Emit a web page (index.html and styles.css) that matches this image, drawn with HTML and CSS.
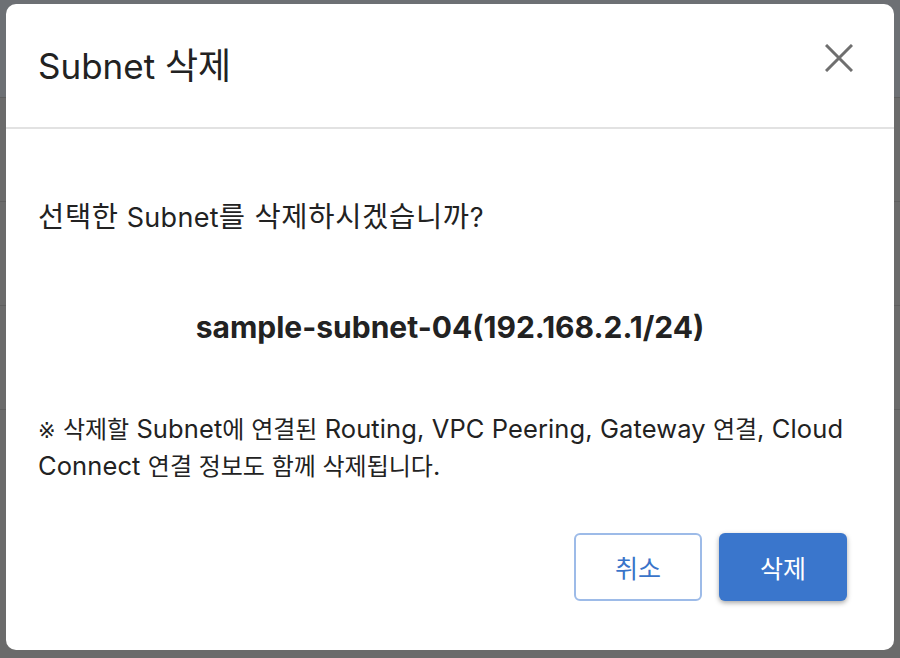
FILE: index.html
```html
<!DOCTYPE html>
<html lang="ko">
<head>
<meta charset="utf-8">
<title>Subnet 삭제</title>
<link rel="stylesheet" href="styles.css">
</head>
<body>
<div class="backdrop">
  <div class="bg-top"></div>
  <div class="bg-row"></div>
  <div class="bg-row"></div>
  <div class="bg-row"></div>
  <div class="bg-rest"></div>
</div>
<div class="dialog" role="dialog">
  <header class="dialog-header">
    <h1 class="dialog-title">Subnet <span class="ko">삭제</span></h1>
    <button class="close-btn" aria-label="닫기">
      <svg width="28" height="28" viewBox="0 0 28 28"><path d="M1 1 L27 27 M27 1 L1 27" stroke="#6f6f6f" stroke-width="3" fill="none"/></svg>
    </button>
  </header>
  <div class="dialog-body">
    <p class="question"><span class="ko">선택한</span> Subnet<span class="ko">를 삭제하시겠습니까</span>?</p>
    <p class="target">sample-subnet-04(192.168.2.1/24)</p>
    <p class="note"><span class="mark">※</span> <span class="ko">삭제할</span> Subnet<span class="ko">에 연결된</span> Routing, VPC Peering, Gateway <span class="ko">연결</span>, Cloud Connect <span class="ko">연결 정보도 함께 삭제됩니다</span>.</p>
  </div>
  <footer class="dialog-footer">
    <button class="btn btn-cancel">취소</button>
    <button class="btn btn-delete">삭제</button>
  </footer>
</div>
</body>
</html>
```
FILE: styles.css
```css
* { box-sizing: border-box; }
html, body { margin: 0; padding: 0; }
body {
  width: 900px;
  height: 658px;
  overflow: hidden;
  position: relative;
  background: #6b6b6b;
  font-family: Inter, "Noto Sans CJK KR", "Noto Sans", sans-serif;
}
.backdrop {
  position: absolute;
  inset: 0;
  display: flex;
  flex-direction: column;
}
.bg-top { height: 98px; background: #6d7074; border-bottom: 1px solid #5f5f5f; }
.bg-row { height: 104px; background: #6b6b6b; border-bottom: 1px solid #5f5f5f; }
.bg-rest { flex: 1; background: #6b6b6b; }

.ko { font-family: "Noto Sans CJK KR", sans-serif; letter-spacing: 0; line-height: 20px; }
.mark { font-family: "DejaVu Sans", sans-serif; font-size: 21px; letter-spacing: 0; line-height: 20px; }

.dialog {
  position: absolute;
  left: 6px;
  top: 4px;
  width: 888px;
  height: 646px;
  background: #fff;
  border-radius: 10px;
  display: flex;
  flex-direction: column;
  color: #222;
}
.dialog-header {
  height: 125px;
  border-bottom: 2px solid #e2e2e2;
  display: flex;
  align-items: center;
  justify-content: space-between;
  padding: 0 41px 0 32px;
}
.dialog-title {
  margin: 0;
  font-size: 35px;
  line-height: 40px;
  font-weight: 400;
  color: #222;
}
.dialog-title .ko { font-size: 36px; }
.close-btn {
  border: 0;
  background: none;
  padding: 0;
  width: 28px;
  height: 28px;
  display: flex;
  margin-bottom: 16px;
}
.dialog-body {
  padding: 72px 32px 0;
}
.dialog-body p { margin: 0; }
.question {
  font-size: 27px;
  line-height: 34px;
  letter-spacing: 0.3px;
  color: #222;
}
.question .ko { font-size: 28.5px; letter-spacing: 0.7px; }
.target {
  margin-top: 75px !important;
  text-align: center;
  font-size: 30px;
  line-height: 34px;
  font-weight: 700;
  color: #222;
}
.note {
  margin-top: 66px !important;
  font-size: 25.5px;
  line-height: 37px;
  letter-spacing: 0.1px;
  color: #222;
}
.note .ko { font-size: 24px; }
.dialog-footer {
  margin-top: auto;
  padding: 0 47px 49px 0;
  display: flex;
  justify-content: flex-end;
  gap: 17px;
}
.btn {
  width: 128px;
  height: 68px;
  border-radius: 6px;
  font-family: "Noto Sans CJK KR", sans-serif;
  font-size: 25px;
}
.btn-cancel {
  background: #fff;
  border: 2px solid #9dbbe8;
  color: #3a74c9;
}
.btn-delete {
  background: #3a76cc;
  border: 0;
  color: #fff;
  box-shadow: 0 2px 5px rgba(0,0,0,0.35);
}
```
